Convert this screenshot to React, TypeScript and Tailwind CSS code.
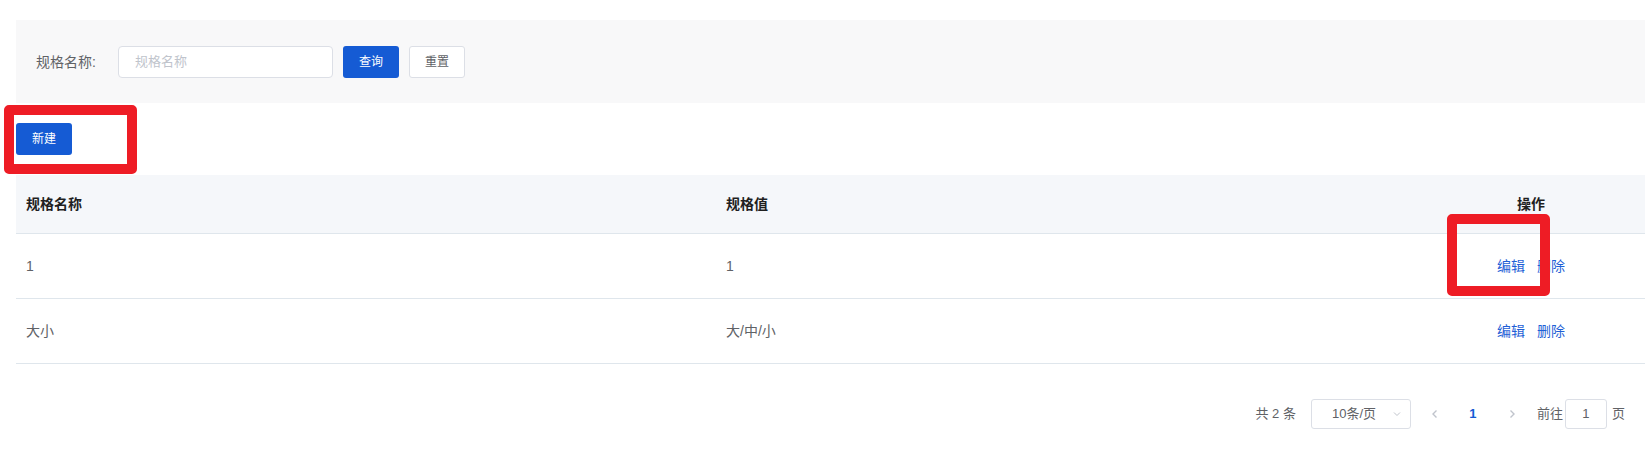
import React from 'react';

const rows = [
  { name: '1', value: '1' },
  { name: '大小', value: '大/中/小' },
];

const font = { fontFamily: '"Liberation Sans", "Noto Sans CJK SC", sans-serif' };

function ChevronLeft() {
  return (
    <svg width="12" height="12" viewBox="0 0 12 12" fill="none" stroke="#c0c4cc" strokeWidth="1.4">
      <path d="M7.5 2.5 4 6l3.5 3.5" />
    </svg>
  );
}

function ChevronRight() {
  return (
    <svg width="12" height="12" viewBox="0 0 12 12" fill="none" stroke="#c0c4cc" strokeWidth="1.4">
      <path d="M4.5 2.5 8 6 4.5 9.5" />
    </svg>
  );
}

export default function App() {
  return (
    <div className="relative min-h-[473px] bg-white pt-5 pl-4" style={font}>
      {/* Search bar */}
      <div className="flex h-[83px] items-center bg-[#f8f8f9] pl-5">
        <label className="w-[82px] text-sm text-[#606266]">规格名称:</label>
        <div className="flex h-8 w-[215px] items-center rounded border border-[#dcdfe6] bg-white px-4 text-[13px] text-[#c0c4cc]">
          规格名称
        </div>
        <button className="ml-2.5 h-8 w-14 rounded-[3px] bg-[#155bd4] text-xs text-white">查询</button>
        <button className="ml-2.5 h-8 w-14 rounded-[3px] border border-[#dcdfe6] bg-white text-xs text-[#606266]">重置</button>
      </div>

      {/* Toolbar */}
      <div className="py-5">
        <button className="h-8 w-14 rounded-[3px] bg-[#155bd4] text-xs text-white">新建</button>
      </div>

      {/* Table */}
      <div className="text-sm">
        <div className="grid h-[59px] grid-cols-[700px_701px_228px] items-center border-b border-[#dfe6ec] bg-[#f5f7fa] font-bold text-[#1f1f1f]">
          <div className="px-2.5">规格名称</div>
          <div className="px-2.5">规格值</div>
          <div className="text-center">操作</div>
        </div>
        {rows.map((r) => (
          <div key={r.name} className="grid h-[65px] grid-cols-[700px_701px_228px] items-center border-b border-[#dfe6ec] text-[#606266]">
            <div className="px-2.5">{r.name}</div>
            <div className="px-2.5">{r.value}</div>
            <div className="flex justify-center gap-3 text-[#1f5fd6]">
              <span>编辑</span>
              <span>删除</span>
            </div>
          </div>
        ))}
      </div>

      {/* Pagination */}
      <div className="mt-[35px] flex items-center justify-end pr-5 text-[13px] text-[#606266]">
        <span>共 2 条</span>
        <div className="ml-[15px] flex h-[30px] w-[100px] items-center justify-between rounded-[3px] border border-[#dcdfe6] pl-5 pr-2">
          <span>10条/页</span>
          <svg width="10" height="10" viewBox="0 0 10 10" fill="none" stroke="#c0c4cc" strokeWidth="1">
            <path d="M2 3.5 5 6.5 8 3.5" />
          </svg>
        </div>
        <span className="ml-[9px] flex h-[30px] w-[30px] items-center justify-center">
          <ChevronLeft />
        </span>
        <span className="ml-2 flex h-[30px] w-[30px] items-center justify-center font-bold text-[#155bd4]">1</span>
        <span className="ml-[9px] flex h-[30px] w-[30px] items-center justify-center">
          <ChevronRight />
        </span>
        <span className="ml-2.5">前往</span>
        <div className="ml-[2px] flex h-[30px] w-[42px] items-center justify-center rounded-[3px] border border-[#dcdfe6]">1</div>
        <span className="ml-[5px]">页</span>
      </div>

      {/* Annotation boxes */}
      <div className="absolute left-[4px] top-[105px] h-[69px] w-[133px] rounded-[5px] border-[10px] border-[#ee1c25]" />
      <div className="absolute left-[1447px] top-[214px] h-[82px] w-[103px] rounded-[5px] border-[10px] border-[#ee1c25]" />
    </div>
  );
}
